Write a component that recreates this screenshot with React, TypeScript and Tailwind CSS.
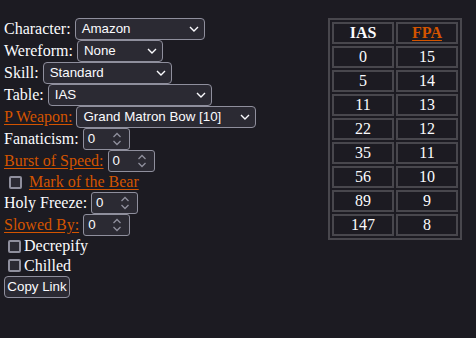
import React from 'react';

const serif = "font-['Liberation_Serif','Times_New_Roman',serif]";
const sans = "font-['Liberation_Sans',Arial,sans-serif]";

const Chevron = () => (
  <svg width="10" height="6" viewBox="0 0 10 6" className="shrink-0">
    <path d="M1 1l4 4 4-4" fill="none" stroke="#fbfbfe" strokeWidth="1.4" />
  </svg>
);

const Spin = () => (
  <svg width="10" height="14" viewBox="0 0 10 14" className="shrink-0">
    <path d="M1.5 5l3.5-3.5L8.5 5M1.5 9l3.5 3.5L8.5 9" fill="none" stroke="#8f8f9d" strokeWidth="1.3" />
  </svg>
);

const Select: React.FC<{ value: string; width: string }> = ({ value, width }) => (
  <div className={`${width} ${sans} h-[22px] flex items-center justify-between pl-[6px] pr-[5px] bg-[#2b2a33] border border-[#8f8f9d] rounded-[4px] text-[13.33px] text-[#fbfbfe]`}>
    <span>{value}</span>
    <Chevron />
  </div>
);

const NumberBox: React.FC<{ value: string }> = ({ value }) => (
  <div className={`${sans} w-[47px] h-[22px] flex items-center justify-between pl-[4px] pr-[7px] bg-[#2b2a33] border border-[#8f8f9d] rounded-[3px] text-[13.33px] text-[#fbfbfe]`}>
    <span>{value}</span>
    <Spin />
  </div>
);

const Check = () => (
  <span className="block w-[13px] h-[13px] shrink-0 bg-[#2b2a33] border-2 border-[#8f8f9d] rounded-[2px]" />
);

const Link: React.FC<{ children: React.ReactNode }> = ({ children }) => (
  <a className="text-[#d35400] underline underline-offset-2">{children}</a>
);

const rows: [number, number][] = [
  [0, 15], [5, 14], [11, 13], [22, 12], [35, 11], [56, 10], [89, 9], [147, 8],
];

const cell = 'w-[62px] h-[22px] p-0 leading-[18px] text-center border-2 border-[#48474d]';

export default function App() {
  return (
    <div className={`${serif} min-h-[338px] bg-[#1c1b22] text-[#fbfbfe] text-[16px] flex items-start`}>
      <div className="pt-[18px] pl-1 flex flex-col">
        <div className="h-[22px] flex items-center gap-[4px]">
          <span>Character:</span>
          <Select value="Amazon" width="w-[130px]" />
        </div>
        <div className="h-[22px] flex items-center gap-[4px]">
          <span>Wereform:</span>
          <Select value="None" width="w-[86px]" />
        </div>
        <div className="h-[22px] flex items-center gap-[4px]">
          <span>Skill:</span>
          <Select value="Standard" width="w-[129px]" />
        </div>
        <div className="h-[22px] flex items-center gap-[4px]">
          <span>Table:</span>
          <Select value="IAS" width="w-[164px]" />
        </div>
        <div className="h-[22px] flex items-center gap-[4px]">
          <Link>P Weapon:</Link>
          <Select value="Grand Matron Bow [10]" width="w-[180px]" />
        </div>
        <div className="h-[22px] flex items-center gap-[4px]">
          <span>Fanaticism:</span>
          <NumberBox value="0" />
        </div>
        <div className="h-[22px] flex items-center gap-[4px]">
          <Link>Burst of Speed:</Link>
          <NumberBox value="0" />
        </div>
        <div className="h-[20px] flex items-center gap-[7px] pl-[5px]">
          <Check />
          <Link>Mark of the Bear</Link>
        </div>
        <div className="h-[22px] flex items-center gap-[4px]">
          <span>Holy Freeze:</span>
          <NumberBox value="0" />
        </div>
        <div className="h-[22px] flex items-center gap-[4px]">
          <Link>Slowed By:</Link>
          <NumberBox value="0" />
        </div>
        <div className="h-[20px] flex items-center gap-[3px] pl-[4px]">
          <Check />
          <span>Decrepify</span>
        </div>
        <div className="h-[19px] flex items-center gap-[3px] pl-[4px]">
          <Check />
          <span>Chilled</span>
        </div>
        <button className={`${sans} mt-px w-[66px] h-[22px] bg-[#2b2a33] border border-[#8f8f9d] rounded-[4px] text-[13.33px] text-[#fbfbfe]`}>
          Copy Link
        </button>
      </div>
      <table className="ml-auto mr-[14px] mt-[18px] border-separate border-spacing-[2px] border-2 border-[#48474d]">
        <thead>
          <tr>
            <th className={`${cell} font-bold`}>IAS</th>
            <th className={`${cell} font-bold`}>
              <Link>FPA</Link>
            </th>
          </tr>
        </thead>
        <tbody>
          {rows.map(([ias, fpa]) => (
            <tr key={ias}>
              <td className={cell}>{ias}</td>
              <td className={cell}>{fpa}</td>
            </tr>
          ))}
        </tbody>
      </table>
    </div>
  );
}
